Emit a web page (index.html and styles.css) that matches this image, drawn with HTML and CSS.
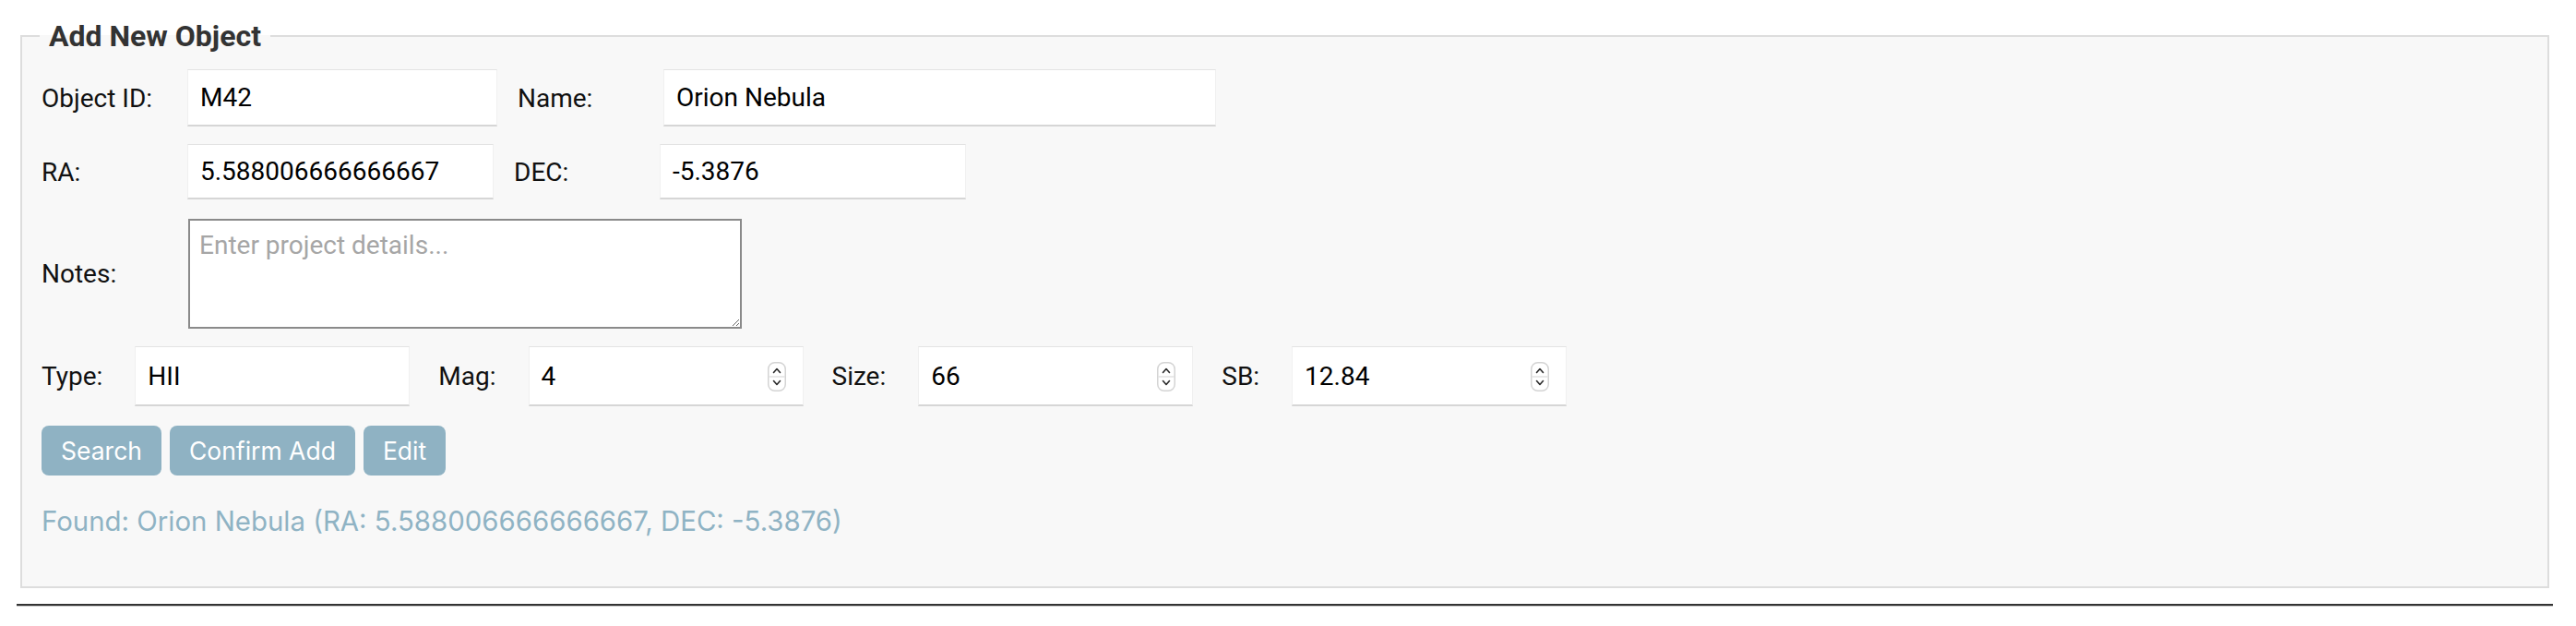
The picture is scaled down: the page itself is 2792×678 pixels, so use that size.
FILE: index.html
```html
<!DOCTYPE html>
<html lang="en">
<head>
<meta charset="utf-8">
<title>Add New Object</title>
<link rel="stylesheet" href="styles.css">
</head>
<body>
<div class="page">
  <fieldset class="panel">
    <legend class="panel-title">Add New Object</legend>

    <div class="row row-1">
      <label class="lbl" for="oid">Object ID:</label>
      <input class="field w-id" id="oid" type="text" value="M42">
      <label class="lbl" for="oname">Name:</label>
      <input class="field w-name" id="oname" type="text" value="Orion Nebula">
    </div>

    <div class="row row-2">
      <label class="lbl" for="ra">RA:</label>
      <input class="field w-ra" id="ra" type="text" value="5.588006666666667">
      <label class="lbl" for="dec">DEC:</label>
      <input class="field w-dec" id="dec" type="text" value="-5.3876">
    </div>

    <div class="row row-notes">
      <label class="lbl" for="notes">Notes:</label>
      <textarea class="notes" id="notes" placeholder="Enter project details..."></textarea>
    </div>

    <div class="row row-type">
      <label class="tlbl" for="otype">Type:</label>
      <input class="field field-short" id="otype" type="text" value="HII">

      <label class="tlbl" for="mag">Mag:</label>
      <span class="num">
        <input class="field field-short field-num" id="mag" type="number" value="4">
        <svg class="spin" width="20" height="32" viewBox="0 0 20 32"><rect x="0.75" y="0.75" width="18.5" height="30.5" rx="7" fill="#fff" stroke="#d4d4d4" stroke-width="1.5"/><line x1="1" y1="16" x2="19" y2="16" stroke="#e2e2e2" stroke-width="1.5"/><path d="M6.5 11.5 L10 7.5 L13.5 11.5" fill="none" stroke="#2b2b2b" stroke-width="1.6" stroke-linecap="round" stroke-linejoin="round"/><path d="M6.5 20.5 L10 24.5 L13.5 20.5" fill="none" stroke="#2b2b2b" stroke-width="1.6" stroke-linecap="round" stroke-linejoin="round"/></svg>
      </span>

      <label class="tlbl" for="size">Size:</label>
      <span class="num">
        <input class="field field-short field-num" id="size" type="number" value="66">
        <svg class="spin" width="20" height="32" viewBox="0 0 20 32"><rect x="0.75" y="0.75" width="18.5" height="30.5" rx="7" fill="#fff" stroke="#d4d4d4" stroke-width="1.5"/><line x1="1" y1="16" x2="19" y2="16" stroke="#e2e2e2" stroke-width="1.5"/><path d="M6.5 11.5 L10 7.5 L13.5 11.5" fill="none" stroke="#2b2b2b" stroke-width="1.6" stroke-linecap="round" stroke-linejoin="round"/><path d="M6.5 20.5 L10 24.5 L13.5 20.5" fill="none" stroke="#2b2b2b" stroke-width="1.6" stroke-linecap="round" stroke-linejoin="round"/></svg>
      </span>

      <label class="tlbl" for="sb">SB:</label>
      <span class="num">
        <input class="field field-short field-num" id="sb" type="number" value="12.84">
        <svg class="spin" width="20" height="32" viewBox="0 0 20 32"><rect x="0.75" y="0.75" width="18.5" height="30.5" rx="7" fill="#fff" stroke="#d4d4d4" stroke-width="1.5"/><line x1="1" y1="16" x2="19" y2="16" stroke="#e2e2e2" stroke-width="1.5"/><path d="M6.5 11.5 L10 7.5 L13.5 11.5" fill="none" stroke="#2b2b2b" stroke-width="1.6" stroke-linecap="round" stroke-linejoin="round"/><path d="M6.5 20.5 L10 24.5 L13.5 20.5" fill="none" stroke="#2b2b2b" stroke-width="1.6" stroke-linecap="round" stroke-linejoin="round"/></svg>
      </span>
    </div>

    <div class="actions">
      <button class="btn" type="button">Search</button>
      <button class="btn" type="button">Confirm Add</button>
      <button class="btn" type="button">Edit</button>
    </div>

    <p class="status">Found: Orion Nebula (RA: 5.588006666666667, DEC: -5.3876)</p>
  </fieldset>
  <hr class="rule">
</div>
</body>
</html>
```

FILE: styles.css
```css
html, body {
  margin: 0;
  padding: 0;
  background: #ffffff;
}

body {
  font-family: Roboto, "Liberation Sans", sans-serif;
  color: #111;
}

.page {
  width: 2749px;
  margin-left: 18px;
  padding-top: 20px;
}

.panel {
  margin: 0 4px;
  padding: 17px 21px 52px 21px;
  background: #f8f8f8;
  border: 2px solid #dddddd;
  min-width: 0;
}

.panel-title {
  font-family: Roboto, sans-serif;
  font-weight: 700;
  font-size: 32px;
  line-height: 38px;
  color: #333333;
  padding: 0 10px;
  margin-left: -2px;
}

.row {
  display: flex;
  align-items: center;
}

.row-1 { margin-bottom: 19px; }
.row-2 { margin-bottom: 21px; }
.row-notes { margin-bottom: 19px; }
.row-type { margin-bottom: 21px; }

.lbl {
  width: 158px;
  flex: none;
  font-size: 28px;
  color: #111;
}

.field {
  box-sizing: border-box;
  height: 62px;
  font-family: Roboto, sans-serif;
  font-size: 28px;
  color: #000;
  background: #fff;
  border: 1px solid #f0f0f0;
  border-top-color: #e3e3e3;
  border-bottom: 2px solid #d6d6d6;
  border-radius: 0;
  padding: 0 13px;
  margin: 0;
  outline: none;
}

.row-2 .field { height: 60px; }

.w-id { width: 336px; margin-right: 22px; }
.w-name { width: 599px; }
.w-ra { width: 332px; margin-right: 22px; }
.w-dec { width: 332px; }

.notes {
  box-sizing: border-box;
  width: 600px;
  height: 119px;
  margin: 0 0 0 1px;
  padding: 10px;
  font-family: Roboto, sans-serif;
  font-size: 28px;
  color: #000;
  background: #fff;
  border: 2px solid #8a8a8a;
  border-radius: 0;
  outline: none;
}

.notes::placeholder {
  color: #a6a6a6;
}

.tlbl {
  font-size: 28px;
  color: #111;
  margin-right: 35px;
}

.field-short {
  width: 298px;
  height: 65px;
  margin-right: 31px;
}

.num {
  position: relative;
  display: inline-flex;
  margin-right: 31px;
}

.num .field-short {
  margin-right: 0;
}

.field-num {
  -moz-appearance: textfield;
  padding-right: 48px;
}

.field-num::-webkit-inner-spin-button,
.field-num::-webkit-outer-spin-button {
  -webkit-appearance: none;
  margin: 0;
}

.spin {
  position: absolute;
  right: 19px;
  top: 50%;
  transform: translateY(-50%);
  display: block;
}

.actions {
  display: flex;
  gap: 9px;
}

.btn {
  height: 54px;
  padding: 0 21px;
  border: none;
  border-radius: 8px;
  background: #8fb2c3;
  color: #ffffff;
  font-family: Inter, "Liberation Sans", sans-serif;
  font-size: 26.5px;
  cursor: pointer;
}

.status {
  margin: 32px 0 0 0;
  font-family: Inter, "Liberation Sans", sans-serif;
  font-size: 29.4px;
  line-height: 36px;
  color: #8fb3c4;
}

.rule {
  margin: 17px 0 0 0;
  height: 0;
  border: 0;
  border-top: 2px solid #333333;
  border-bottom: 1px solid #cccccc;
}
```
